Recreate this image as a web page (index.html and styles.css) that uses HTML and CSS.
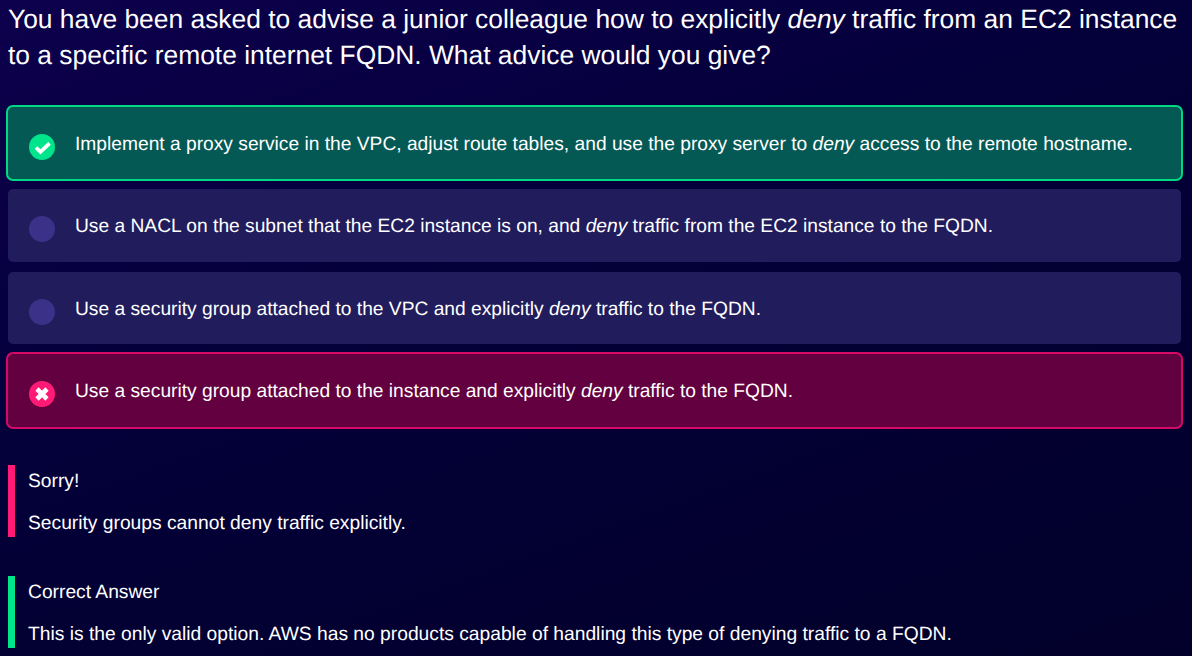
FILE: index.html
```html
<!DOCTYPE html>
<html lang="en">
<head>
    <meta charset="UTF-8">
    <meta name="viewport" content="width=device-width, initial-scale=1.0">
    <title>Quiz question</title>
    <link rel="stylesheet" href="styles.css">
</head>
<body>
    <h1 class="question">You have been asked to advise a junior colleague how to explicitly <em>deny</em> traffic from an EC2 instance to a specific remote internet FQDN. What advice would you give?</h1>

    <ul class="options">
        <li class="option option-correct">
            <span class="mark">
                <svg viewBox="0 0 26 26" width="26" height="26"><path d="M7 13.5l4.4 4.4L20.5 9.3" fill="none" stroke="#fff" stroke-width="3.8"/></svg>
            </span>
            <span class="option-text">Implement a proxy service in the VPC, adjust route tables, and use the proxy server to <em>deny</em> access to the remote hostname.</span>
        </li>
        <li class="option">
            <span class="mark"></span>
            <span class="option-text">Use a NACL on the subnet that the EC2 instance is on, and <em>deny</em> traffic from the EC2 instance to the FQDN.</span>
        </li>
        <li class="option">
            <span class="mark"></span>
            <span class="option-text">Use a security group attached to the VPC and explicitly <em>deny</em> traffic to the FQDN.</span>
        </li>
        <li class="option option-wrong">
            <span class="mark">
                <svg viewBox="0 0 26 26" width="26" height="26"><path d="M8 8l10 10M18 8L8 18" fill="none" stroke="#fff" stroke-width="4.6"/></svg>
            </span>
            <span class="option-text">Use a security group attached to the instance and explicitly <em>deny</em> traffic to the FQDN.</span>
        </li>
    </ul>

    <div class="note note-wrong">
        <p>Sorry!</p>
        <p>Security groups cannot deny traffic explicitly.</p>
    </div>

    <div class="note note-correct">
        <p>Correct Answer</p>
        <p>This is the only valid option. AWS has no products capable of handling this type of denying traffic to a FQDN.</p>
    </div>
</body>
</html>
```

FILE: styles.css
```css
html {
    height: 100%;
    overflow: hidden;
}

body {
    font-family: 'Liberation Sans', Arial, sans-serif;
    background: #02003a linear-gradient(160deg, #0d004d 0%, #04003a 40%, #030030 75%, #02002a 100%);
    color: #fff;
    margin: 0;
    padding: 0 11px 0 8px;
    height: 100%;
    text-rendering: geometricPrecision;
}

.question {
    font-size: 26.4px;
    font-weight: normal;
    line-height: 36px;
    margin: 0;
    padding: 1px 0 34px;
}

.options {
    list-style: none;
    margin: 0;
    padding: 0;
}

.option {
    display: flex;
    align-items: flex-start;
    height: 72.4px;
    margin-bottom: 10px;
    padding: 27px 21px 0;
    box-sizing: border-box;
    background-color: #211c5c;
    border-radius: 5px;
    font-size: 19.22px;
    line-height: 22px;
}

.option-correct {
    background-color: #045955;
    box-shadow: 0 0 0 2px #00d984;
}

.option-wrong {
    background-color: #620040;
    box-shadow: 0 0 0 2px #d40a66;
}

.mark {
    flex: none;
    width: 26px;
    height: 26px;
    margin: 0 20px 0 0;
    border-radius: 50%;
    background-color: #3c3189;
}

.mark svg {
    display: block;
}

.option-correct .mark {
    background-color: #00e58b;
}

.option-wrong .mark {
    background-color: #ff1a75;
}

.note {
    border-left: 7px solid;
    padding: 6px 0 2px 13px;
    font-size: 19.24px;
    line-height: 22px;
    margin-bottom: 39px;
}

.note p {
    margin: 0 0 20px;
}

.note p:last-child {
    margin-bottom: 0;
}

.note-wrong {
    border-color: #ff1a75;
    margin-top: 38px;
}

.note-correct {
    border-color: #00e58b;
}
```
